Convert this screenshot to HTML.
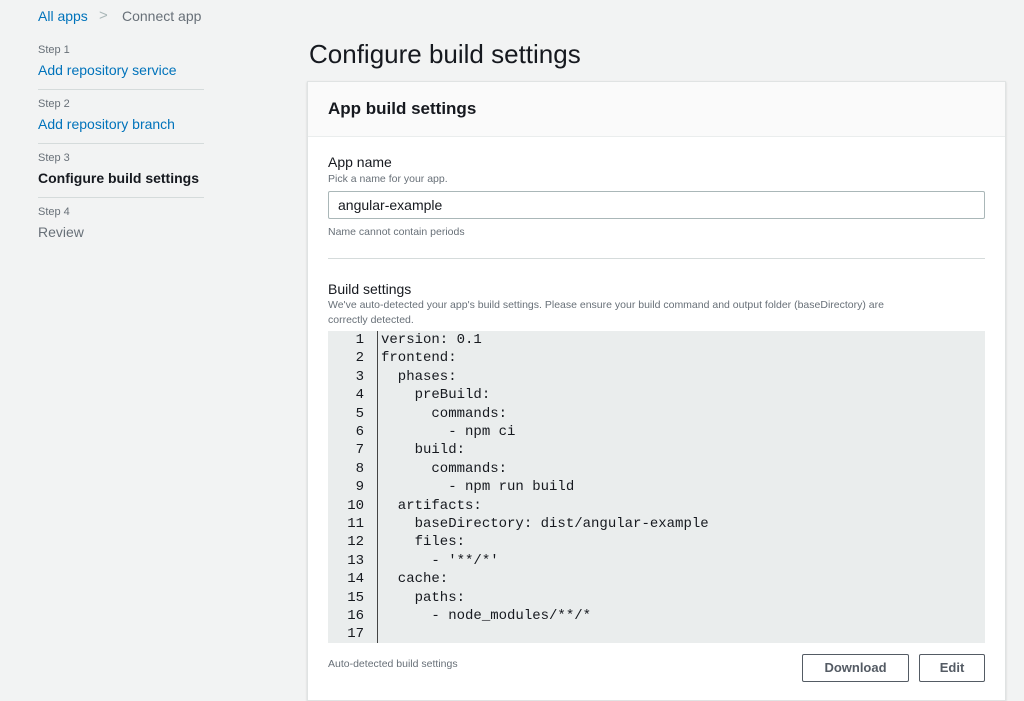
<!DOCTYPE html>
<html><head><meta charset="utf-8"><style>
*{margin:0;padding:0;box-sizing:border-box}
body{width:1024px;height:688px;background:#f2f3f3;font-family:"Liberation Sans",sans-serif;position:relative;overflow:hidden;color:#16191f}
.a{position:absolute;white-space:nowrap}
.blue{color:#0073bb}
.step{font-size:11px;color:#687078}
.nav{font-size:14px}
.hr{position:absolute;left:38px;width:166px;height:1px;background:#d5dbdb}
.panel{position:absolute;left:307px;top:81px;width:699px;height:620px;background:#fff;border:1px solid #e0e3e3;box-shadow:0 1px 2px rgba(0,0,0,.15)}
.ph{position:absolute;left:0;top:0;right:0;height:55px;background:#fafafa;border-bottom:1px solid #eaeded}
.small{font-size:10.5px;color:#687078}
.code{position:absolute;left:328px;top:331px;width:657px;height:312px;background:#eaeded;font-family:"Liberation Mono",monospace;font-size:14px;color:#16191f}
.gut{position:absolute;left:0;top:0;width:50px;height:312px;border-right:1px solid #444}
.ln{position:absolute;right:14px;text-align:right}
.btn{position:absolute;height:28px;border:1px solid #545b64;border-radius:2px;background:#fff;font-weight:bold;font-size:13px;color:#545b64;text-align:center;line-height:26px}
</style></head><body>
<div class="a blue" style="left:38px;top:8px;font-size:14px">All apps</div>
<div class="a" style="left:99px;top:7px;font-size:15px;color:#aab7b8">&gt;</div>
<div class="a" style="left:122px;top:8px;font-size:14px;color:#687078">Connect app</div>

<div class="a step" style="left:38px;top:44px">Step 1</div>
<div class="a nav blue" style="left:38px;top:62px">Add repository service</div>
<div class="hr" style="top:89px"></div>
<div class="a step" style="left:38px;top:98px">Step 2</div>
<div class="a nav blue" style="left:38px;top:116px">Add repository branch</div>
<div class="hr" style="top:143px"></div>
<div class="a step" style="left:38px;top:152px">Step 3</div>
<div class="a nav" style="left:38px;top:170px;font-weight:bold">Configure build settings</div>
<div class="hr" style="top:197px"></div>
<div class="a step" style="left:38px;top:206px">Step 4</div>
<div class="a nav" style="left:38px;top:224px;color:#687078">Review</div>

<div class="a" style="left:309px;top:39px;font-size:26px">Configure build settings</div>

<div class="panel"><div class="ph"></div></div>
<div class="a" style="left:328px;top:99px;font-size:17px;font-weight:bold">App build settings</div>
<div class="a" style="left:328px;top:154px;font-size:14px">App name</div>
<div class="a small" style="left:328px;top:173px">Pick a name for your app.</div>
<div class="a" style="left:328px;top:191px;width:657px;height:28px;border:1px solid #aab7b8;border-radius:2px;background:#fff"></div>
<div class="a" style="left:338px;top:197px;font-size:14px">angular-example</div>
<div class="a small" style="left:328px;top:226px">Name cannot contain periods</div>
<div class="a" style="left:328px;top:258px;width:657px;height:1px;background:#d5dbdb"></div>
<div class="a" style="left:328px;top:281px;font-size:14px">Build settings</div>
<div class="a small" style="left:328px;top:299px">We've auto-detected your app's build settings. Please ensure your build command and output folder (baseDirectory) are</div>
<div class="a small" style="left:328px;top:314px">correctly detected.</div>

<div class="code"><div class="gut"></div>
<div style="position:absolute;left:0;top:0;width:50px">
<div class="ln" style="top:0">1</div><div class="ln" style="top:18.4px">2</div><div class="ln" style="top:36.8px">3</div><div class="ln" style="top:55.2px">4</div><div class="ln" style="top:73.6px">5</div><div class="ln" style="top:92px">6</div><div class="ln" style="top:110.4px">7</div><div class="ln" style="top:128.8px">8</div><div class="ln" style="top:147.2px">9</div><div class="ln" style="top:165.6px">10</div><div class="ln" style="top:184px">11</div><div class="ln" style="top:202.4px">12</div><div class="ln" style="top:220.8px">13</div><div class="ln" style="top:239.2px">14</div><div class="ln" style="top:257.6px">15</div><div class="ln" style="top:276px">16</div><div class="ln" style="top:294.4px">17</div>
</div>
<pre style="position:absolute;left:53px;top:0;font:inherit;line-height:18.4px">version: 0.1
frontend:
  phases:
    preBuild:
      commands:
        - npm ci
    build:
      commands:
        - npm run build
  artifacts:
    baseDirectory: dist/angular-example
    files:
      - '**/*'
  cache:
    paths:
      - node_modules/**/*
</pre></div>
<style>.ln{top:0}.code .ln{line-height:18.4px;margin-top:0}</style>
<div class="a small" style="left:328px;top:658px">Auto-detected build settings</div>
<div class="btn" style="left:802px;top:654px;width:107px">Download</div>
<div class="btn" style="left:919px;top:654px;width:66px">Edit</div>
</body></html>
